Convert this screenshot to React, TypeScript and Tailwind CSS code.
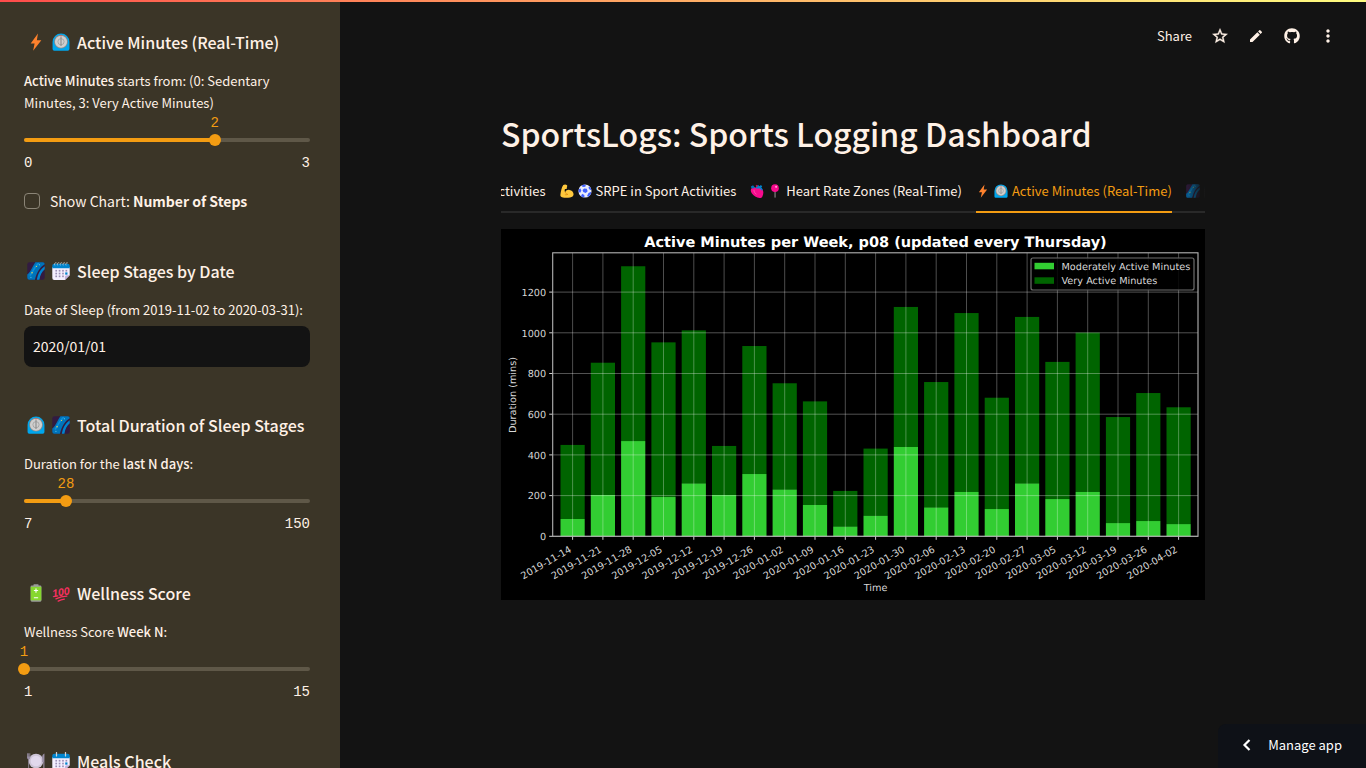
import { useEffect, useId, useRef, useState } from "react";
import type { ReactNode } from "react";
import { MdStarOutline, MdEdit, MdMoreVert } from "react-icons/md";
import { FaGithub } from "react-icons/fa";

/* ---------- emoji drawings, all on a 32x32 grid ---------- */

type GlyphProps = { className?: string };

function Bolt({ className }: GlyphProps) {
  return (
    <svg viewBox="0 0 32 32" className={className} aria-hidden="true">
      <path d="M19.500 1 6.500 18.700h7L10.900 31.500 25.500 12.800h-8z" fill="#ff822d" />
    </svg>
  );
}

function Clock({ className }: GlyphProps) {
  return (
    <svg viewBox="0 0 32 32" className={className} aria-hidden="true">
      <path d="M1 16a15 15 0 0 1 30 0v12.500a3 3 0 0 1-3 3H4a3 3 0 0 1-3-3z" fill="#00a6ed" />
      <circle cx="16" cy="15.500" r="12.200" fill="#8b8b8b" />
      <circle cx="16" cy="15.500" r="10.800" fill="#cfcfcf" />
      <circle cx="16" cy="15.500" r="5.500" fill="none" stroke="#9b9b9b" strokeWidth="1.300" />
      <path d="M15 7h2v15a1 1 0 0 1-2 0z" fill="#8b8b8b" />
      <path d="M14.800 4.500h2.400L16 7z" fill="#f8312f" />
    </svg>
  );
}

function Galaxy({ className }: GlyphProps) {
  return (
    <svg viewBox="0 0 32 32" className={className} aria-hidden="true">
      <rect x="0.500" y="0.500" width="31" height="31" rx="4" fill="#321b41" />
      <path d="M15 .5h13a3.500 3.500 0 0 1 3.500 3.500C23 9 17.500 18 14 31.500H4A3.500 3.500 0 0 1 .5 28v-6C5 20.500 9 9 15 .5z" fill="#0074ba" />
      <path d="M31.500 7.500C24 13 19.500 20 17.500 31.500h4.500C23.500 23 26.500 17 31.500 13z" fill="#0084ce" />
      <path d="M20 3c-6 5-9 13-14 20" stroke="#0a8fdc" strokeWidth="3" strokeLinecap="round" fill="none" />
      <g fill="#fcd53f">
        <circle cx="9" cy="19" r="1.300" />
        <circle cx="17" cy="8" r="1.100" />
      </g>
      <g fill="#7ce3ff">
        <circle cx="22" cy="5" r="0.900" />
        <circle cx="7" cy="27" r="0.900" />
      </g>
    </svg>
  );
}

function CalendarBody() {
  return (
    <>
      <path d="M.5 9h31v14.500L23 32H4a3.500 3.500 0 0 1-3.500-3.500z" fill="#f4efff" />
      <path d="M31.500 23.500 23 32v-5.500a3 3 0 0 1 3-3z" fill="#c2b2de" />
      <path d="M4 3h24a3.500 3.500 0 0 1 3.500 3.500V11H.5V6.500A3.500 3.500 0 0 1 4 3z" fill="#0084ce" />
      <g fill="#9b8fb5">
        <rect x="6" y="14" width="3" height="3" />
        <rect x="12" y="14" width="3" height="3" />
        <rect x="18" y="14" width="3" height="3" />
        <rect x="24" y="14" width="3" height="3" />
        <rect x="6" y="19" width="3" height="3" />
        <rect x="12" y="19" width="3" height="3" />
        <rect x="18" y="19" width="3" height="3" />
        <rect x="6" y="24" width="3" height="3" />
        <rect x="12" y="24" width="3" height="3" />
        <rect x="18" y="24" width="3" height="3" />
      </g>
      <rect x="23.500" y="18.500" width="4" height="4" fill="#0084ce" />
    </>
  );
}

function SpiralCalendar({ className }: GlyphProps) {
  return (
    <svg viewBox="0 0 32 32" className={className} aria-hidden="true">
      <CalendarBody />
      <g fill="none" stroke="#d3d3d3" strokeWidth="1.300">
        <path d="M5 6c-2-3 1-5.500 3-4.500M10 6c-2-3 1-5.500 3-4.500M15 6c-2-3 1-5.500 3-4.500M20 6c-2-3 1-5.500 3-4.500M25 6c-2-3 1-5.500 3-4.500" />
      </g>
    </svg>
  );
}

function Calendar({ className }: GlyphProps) {
  return (
    <svg viewBox="0 0 32 32" className={className} aria-hidden="true">
      <CalendarBody />
      <path d="M8 1v6M24 1v6" stroke="#d3d3d3" strokeWidth="2.200" strokeLinecap="round" />
    </svg>
  );
}

function Battery({ className }: GlyphProps) {
  return (
    <svg viewBox="0 0 32 32" className={className} aria-hidden="true">
      <path d="M12.500.5h7a1 1 0 0 1 1 1V4h-9V1.500a1 1 0 0 1 1-1z" fill="#9b9b9b" />
      <rect x="6.500" y="2.500" width="19" height="29" rx="2" fill="#9b9b9b" />
      <rect x="6.500" y="5" width="19" height="24" fill="#86d72f" />
      <path d="M16 8.500v6M13 11.500h6M13 24.500h6" stroke="#fff" strokeWidth="2" strokeLinecap="round" />
    </svg>
  );
}

function Hundred({ className }: GlyphProps) {
  return (
    <svg viewBox="0 0 32 32" className={className} aria-hidden="true">
      <text
        x="16"
        y="21"
        textAnchor="middle"
        transform="rotate(-9 16 16)"
        fontFamily="Liberation Sans, sans-serif"
        fontStyle="italic"
        fontWeight="700"
        fontSize="19"
        fill="#f92f60"
      >
        100
      </text>
      <path d="M7 26.500q9-4.500 19.500-5M11 30.500q5-2.800 11-3.500" stroke="#f92f60" strokeWidth="2.200" strokeLinecap="round" fill="none" />
    </svg>
  );
}

function Plate({ className }: GlyphProps) {
  return (
    <svg viewBox="0 0 32 32" className={className} aria-hidden="true">
      <circle cx="16" cy="16" r="13" fill="#cdc4d6" />
      <circle cx="16" cy="16" r="9.500" fill="#e1d8ec" />
      <path d="M.8 3v6.500M2.900 3v6.500M5 3v6.500M2.900 10v19" stroke="#998ea4" strokeWidth="1.500" strokeLinecap="round" />
      <path d="M.3 8h5.300v2.500a2.600 2.600 0 0 1-5.300 0z" fill="#998ea4" />
      <path d="M31 2.500V30h-2V18h-2V9c0-3.500 2-6 4-6.500z" fill="#998ea4" />
    </svg>
  );
}

function Biceps({ className }: GlyphProps) {
  return (
    <svg viewBox="0 0 32 32" className={className} aria-hidden="true">
      <path
        d="M7.500 2.500C10 .5 14.500 1 16 3c1 1.500.5 3.500-.5 4.500.8 1.200.5 3-1 3.800-1 .6-2.500.4-3.200 0-1 3.200-.8 5.200.5 7.400 1.800-3.700 5.400-5.700 9.700-5.200 6 .6 9.800 5.600 9.500 10.500-.3 3.700-3 6-8 6.800-7 1-13.500.8-18.500-.8-3-1-4-3-3.500-6C2 17 3.500 8 7.500 2.500z"
        fill="#ffc83d"
      />
      <path d="M12 18.500c.5 2.500 2.500 4.500 5 5.500M12 24.500c2 .7 4.200.2 5.500-1.200" stroke="#d67d00" strokeWidth="1.400" strokeLinecap="round" fill="none" />
    </svg>
  );
}

function Soccer({ className }: GlyphProps) {
  return (
    <svg viewBox="0 0 32 32" className={className} aria-hidden="true">
      <circle cx="16" cy="16" r="15" fill="#e8ebfa" />
      <g fill="#3f5fff">
        <path d="m14 10.500 6 .2 2 5.600-4.500 4.200-5.500-2.200-1.600-4.500z" />
        <path d="M8 3.400 14.500 1l3.500 2-1.500 3-5.500 1z" />
        <path d="M25.500 4.500 31 12.500l-3.500 1L24 9z" />
        <path d="m1.500 12 4.500-1.500 1.500 5L5 20l-3.700-1.500z" />
        <path d="m9.500 22.500 5 2.500v5.900A15 15 0 0 1 6.800 28z" />
        <path d="m24 20.500 5-2 1.500 1A15 15 0 0 1 23 29.500L20.800 27z" />
      </g>
    </svg>
  );
}

function Heart({ className }: GlyphProps) {
  return (
    <svg viewBox="0 0 32 32" className={className} aria-hidden="true">
      <path d="M4 9c-3 4-3 8 0 12 4 6 11 10 18 11 3 .5 5.500-1 6.500-4 2-5 3-10 .5-15C25 8 19 7.500 14 9 10 6.500 6.500 6.500 4 9z" fill="#f70a8d" />
      <path d="M2 5.500 7 3l4.500 5.500-5 2C4 10.500 2.500 8.500 2 5.500z" fill="#0074ba" />
      <path d="M13 9c0-4 3-7 6.500-6L21.500 5 25 2l3 3.500L25.500 8c2.500 1.500 3.500 4 3 7l-3-.5c-.5-3-2-4-5-4s-5.500.5-7.500-1.500z" fill="#0084ce" />
      <path d="m13 3.500 2.500-2 2.500 3-3 3.500z" fill="#ca0b4a" />
      <path d="M9 14c0 4 2 7 5 9" stroke="#ff6db7" strokeWidth="1.600" strokeLinecap="round" fill="none" />
    </svg>
  );
}

function Pin({ className }: GlyphProps) {
  return (
    <svg viewBox="0 0 32 32" className={className} aria-hidden="true">
      <rect x="15" y="15" width="2.200" height="16.500" rx="1" fill="#9b9b9b" />
      <circle cx="16" cy="9.500" r="8.700" fill="#f70a8d" />
      <circle cx="18.500" cy="6.500" r="2.400" fill="#ff9fd0" />
    </svg>
  );
}

/* ---------- sidebar ---------- */

type Glyph = (props: GlyphProps) => ReactNode;

function SectionHeading({ first: First, second: Second, children }: { first: Glyph; second: Glyph; children: ReactNode }) {
  return (
    <h3 className="mb-4 flex items-center gap-[7px] pl-[3px] text-[16px] leading-6 font-medium whitespace-nowrap">
      <First className="size-[18px] shrink-0" />
      <Second className="size-[18px] shrink-0" />
      {children}
    </h3>
  );
}

function Slider({ label, min, max, initial }: { label: ReactNode; min: number; max: number; initial: number }) {
  const id = useId();
  const [value, setValue] = useState(initial);
  const percent = ((value - min) / (max - min)) * 100;

  return (
    <div className="pb-[3px]">
      <label htmlFor={id} className="block text-[13px] leading-[22px]">
        {label}
      </label>
      <div className="relative h-[17px] font-[Liberation_Mono,monospace] text-[14px] leading-[18px] text-[#f39c12]">
        <output htmlFor={id} className="absolute -translate-x-1/2" style={{ left: `${percent}%` }}>
          {value}
        </output>
      </div>
      <div className="relative flex h-[18px] items-center">
        <div className="h-1 w-full overflow-hidden rounded-full bg-[#5f5848]">
          <div className="h-full bg-[#f39c12]" style={{ width: `${percent}%` }} />
        </div>
        <input
          id={id}
          type="range"
          min={min}
          max={max}
          value={value}
          onChange={(event) => setValue(Number(event.target.value))}
          className="absolute -inset-x-1.5 h-[18px] cursor-pointer appearance-none bg-transparent [&::-webkit-slider-thumb]:size-3 [&::-webkit-slider-thumb]:appearance-none [&::-webkit-slider-thumb]:rounded-full [&::-webkit-slider-thumb]:bg-[#f39c12]"
        />
      </div>
      <div className="mt-1.5 flex justify-between font-[Liberation_Mono,monospace] text-[14px] leading-4">
        <span>{min}</span>
        <span>{max}</span>
      </div>
    </div>
  );
}

function Sidebar() {
  return (
    <aside className="flex w-[340px] shrink-0 flex-col gap-[46px] overflow-hidden bg-[#3b3527] pt-[30px] pr-[30px] pl-6">
      <section>
        <SectionHeading first={Bolt} second={Clock}>
          Active Minutes (Real-Time)
        </SectionHeading>
        <Slider
          label={
            <>
              <strong className="font-medium">Active Minutes</strong> starts from: (0: Sedentary Minutes, 3: Very Active Minutes)
            </>
          }
          min={0}
          max={3}
          initial={2}
        />
        <label className="mt-[15px] flex items-center gap-2.5 text-[14px] leading-6">
          <input
            type="checkbox"
            className="size-4 shrink-0 appearance-none rounded border border-[#8b8577] checked:border-[#f39c12] checked:bg-[#f39c12]"
          />
          <span>
            Show Chart: <strong className="font-semibold">Number of Steps</strong>
          </span>
        </label>
      </section>

      <section>
        <SectionHeading first={Galaxy} second={SpiralCalendar}>
          Sleep Stages by Date
        </SectionHeading>
        <label htmlFor="sleep-date" className="block text-[13px] leading-[22px]">
          Date of Sleep (from 2019-11-02 to 2020-03-31):
        </label>
        <input
          id="sleep-date"
          type="text"
          defaultValue="2020/01/01"
          className="mt-[5px] block h-[41px] w-full rounded-lg bg-[#131313] px-[9px] pb-0.5 text-[14px] outline-none"
        />
      </section>

      <section>
        <SectionHeading first={Clock} second={Galaxy}>
          Total Duration of Sleep Stages
        </SectionHeading>
        <Slider
          label={
            <>
              Duration for the <strong className="font-medium">last N days</strong>:
            </>
          }
          min={7}
          max={150}
          initial={28}
        />
      </section>

      <section>
        <SectionHeading first={Battery} second={Hundred}>
          Wellness Score
        </SectionHeading>
        <Slider
          label={
            <>
              Wellness Score <strong className="font-medium">Week N</strong>:
            </>
          }
          min={1}
          max={15}
          initial={1}
        />
      </section>

      <section>
        <SectionHeading first={Plate} second={Calendar}>
          Meals Check
        </SectionHeading>
      </section>
    </aside>
  );
}

/* ---------- tabs ---------- */

const TABS: { label: string; icons: Glyph[] }[] = [
  { label: "Sport Activities", icons: [] },
  { label: "SRPE in Sport Activities", icons: [Biceps, Soccer] },
  { label: "Heart Rate Zones (Real-Time)", icons: [Heart, Pin] },
  { label: "Active Minutes (Real-Time)", icons: [Bolt, Clock] },
  { label: "Sleep Stages by Date", icons: [Galaxy, SpiralCalendar] },
  { label: "Total Duration of Sleep Stages", icons: [Clock, Galaxy] },
];

function TabBar() {
  const [active, setActive] = useState(3);
  const scroller = useRef<HTMLDivElement>(null);
  const current = useRef<HTMLButtonElement>(null);

  // Keep the selected tab fully visible, with the start of the next one after it.
  useEffect(() => {
    const box = scroller.current;
    const tab = current.current;
    if (!box || !tab) return;
    box.scrollLeft = tab.offsetLeft + tab.offsetWidth + 33 - box.clientWidth;
  }, [active]);

  return (
    <div className="relative">
      <div className="absolute inset-x-0 bottom-0 h-0.5 bg-[#292929]" />
      <div ref={scroller} role="tablist" className="relative flex gap-[14px] overflow-hidden">
        {TABS.map((tab, index) => (
          <button
            key={tab.label}
            ref={index === active ? current : undefined}
            type="button"
            role="tab"
            aria-selected={index === active}
            onClick={() => setActive(index)}
            className={`flex h-[42px] shrink-0 items-center gap-1 border-b-2 text-[13px] whitespace-nowrap ${
              index === active ? "border-[#f39c12] text-[#f39c12]" : "border-transparent"
            }`}
          >
            {tab.icons.map((Icon, i) => (
              <Icon key={i} className="size-[14px] shrink-0" />
            ))}
            <span>{tab.label}</span>
          </button>
        ))}
      </div>
      <div className="pointer-events-none absolute top-0 right-0 h-10 w-6 bg-gradient-to-r from-transparent to-[#131313]" />
    </div>
  );
}

/* ---------- chart ---------- */

const WEEKS: { date: string; moderate: number; total: number }[] = [
  { date: "2019-11-14", moderate: 85, total: 449 },
  { date: "2019-11-21", moderate: 203, total: 853 },
  { date: "2019-11-28", moderate: 468, total: 1327 },
  { date: "2019-12-05", moderate: 193, total: 953 },
  { date: "2019-12-12", moderate: 260, total: 1012 },
  { date: "2019-12-19", moderate: 203, total: 444 },
  { date: "2019-12-26", moderate: 306, total: 935 },
  { date: "2020-01-02", moderate: 230, total: 752 },
  { date: "2020-01-09", moderate: 154, total: 663 },
  { date: "2020-01-16", moderate: 48, total: 223 },
  { date: "2020-01-23", moderate: 101, total: 431 },
  { date: "2020-01-30", moderate: 439, total: 1127 },
  { date: "2020-02-06", moderate: 142, total: 758 },
  { date: "2020-02-13", moderate: 218, total: 1097 },
  { date: "2020-02-20", moderate: 134, total: 681 },
  { date: "2020-02-27", moderate: 260, total: 1078 },
  { date: "2020-03-05", moderate: 183, total: 857 },
  { date: "2020-03-12", moderate: 218, total: 1001 },
  { date: "2020-03-19", moderate: 65, total: 586 },
  { date: "2020-03-26", moderate: 75, total: 704 },
  { date: "2020-04-02", moderate: 60, total: 634 },
];

const PLOT = { left: 51.7, right: 697, top: 23.8, bottom: 307.3 };
const BAR_WIDTH = 24.2;
const centerOf = (index: number) => 71.6 + index * 30.3;
const heightOf = (value: number) => value * 0.2035;

function Chart() {
  return (
    <svg
      viewBox="0 0 704 371"
      role="img"
      aria-label="Active Minutes per Week"
      className="block w-full bg-black"
      fontFamily="DejaVu Sans, sans-serif"
      fill="#d8d8d8"
      textRendering="geometricPrecision"
    >
      <text x="374.500" y="18" textAnchor="middle" fontSize="14.500" fontWeight="700" fill="#fff">
        Active Minutes per Week, p08 (updated every Thursday)
      </text>
      {WEEKS.map((week, i) => (
        <g key={week.date}>
          <rect x={centerOf(i) - BAR_WIDTH / 2} y={PLOT.bottom - heightOf(week.total)} width={BAR_WIDTH} height={heightOf(week.total - week.moderate)} fill="#006400" />
          <rect x={centerOf(i) - BAR_WIDTH / 2} y={PLOT.bottom - heightOf(week.moderate)} width={BAR_WIDTH} height={heightOf(week.moderate)} fill="#32cd32" />
          <line x1={centerOf(i)} x2={centerOf(i)} y1={PLOT.top} y2={PLOT.bottom} stroke="#fff" strokeOpacity="0.300" />
          <line x1={centerOf(i)} x2={centerOf(i)} y1={PLOT.bottom} y2={PLOT.bottom + 3.500} stroke="#d0d0d0" />
          <text textAnchor="end" fontSize="9.700" transform={`translate(${centerOf(i) - 0.500} ${PLOT.bottom + 15}) rotate(-30)`}>
            {week.date}
          </text>
        </g>
      ))}
      {[0, 200, 400, 600, 800, 1000, 1200].map((tick) => {
        const y = PLOT.bottom - heightOf(tick);
        return (
          <g key={tick}>
            <line x1={PLOT.left} x2={PLOT.right} y1={y} y2={y} stroke="#fff" strokeOpacity="0.320" />
            <line x1={PLOT.left - 3.500} x2={PLOT.left} y1={y} y2={y} stroke="#d0d0d0" />
            <text x={PLOT.left - 6.500} y={y + 3.700} textAnchor="end" fontSize="9.700">
              {tick}
            </text>
          </g>
        );
      })}
      <rect x={PLOT.left} y={PLOT.top} width={PLOT.right - PLOT.left} height={PLOT.bottom - PLOT.top} fill="none" stroke="#b4b4b4" strokeWidth="1.100" />
      <rect x="530" y="29" width="163" height="32" rx="2" fill="#000" fillOpacity="0.850" stroke="#6e6e6e" strokeWidth="1.200" />
      <rect x="533.500" y="33.800" width="19.500" height="6.500" fill="#32cd32" />
      <rect x="533.500" y="48.300" width="19.500" height="6.500" fill="#006400" />
      <text x="560.500" y="40.800" fontSize="9.700">
        Moderately Active Minutes
      </text>
      <text x="560.500" y="55.300" fontSize="9.700">
        Very Active Minutes
      </text>
      <text x="374.500" y="362" textAnchor="middle" fontSize="9.700">
        Time
      </text>
      <text textAnchor="middle" fontSize="9.700" transform="translate(14.500 166) rotate(-90)">
        Duration (mins)
      </text>
    </svg>
  );
}

/* ---------- page ---------- */

const toolButton = "flex size-9 items-center justify-center";

export default function App() {
  return (
    <div className="flex h-screen overflow-hidden bg-[#131313] font-[Noto_Sans_CJK_SC,sans-serif] text-[#fff1e6]">
      <div className="fixed inset-x-0 top-0 z-10 h-0.5 bg-gradient-to-r from-[#ff4b4b] to-[#fffd80]" />
      <Sidebar />
      <div className="flex min-w-0 flex-1 flex-col">
        <header className="flex h-[72px] items-center justify-end pr-5">
          <button type="button" className="mr-2.5 text-[13px]">
            Share
          </button>
          <button type="button" aria-label="Favorite" className={toolButton}>
            <MdStarOutline className="size-[18px]" stroke="currentColor" strokeWidth="0.500" />
          </button>
          <button type="button" aria-label="Edit" className={toolButton}>
            <MdEdit className="size-4" />
          </button>
          <a href="#source" aria-label="View source on GitHub" className={toolButton}>
            <FaGithub className="size-4" />
          </a>
          <button type="button" aria-label="More options" className={toolButton}>
            <MdMoreVert className="size-5" />
          </button>
        </header>
        <main className="mx-auto w-full max-w-[704px] pt-9">
          <h1 className="mb-3.5 pt-0.5 text-[32px] leading-[47px] font-medium whitespace-nowrap">SportsLogs: Sports Logging Dashboard</h1>
          <TabBar />
          <div className="mt-4">
            <Chart />
          </div>
        </main>
      </div>
      <button type="button" className="fixed right-0 bottom-0 flex h-11 items-center gap-4 rounded-tl-lg bg-[#0e1117] pr-6 pb-0.5 pl-6 text-[13px] text-white">
        <svg viewBox="0 0 10 12" className="h-3 w-2.5" fill="none" stroke="currentColor" strokeWidth="2.200" aria-hidden="true">
          <path d="M7.500 1 2.500 6l5 5" />
        </svg>
        Manage app
      </button>
    </div>
  );
}
